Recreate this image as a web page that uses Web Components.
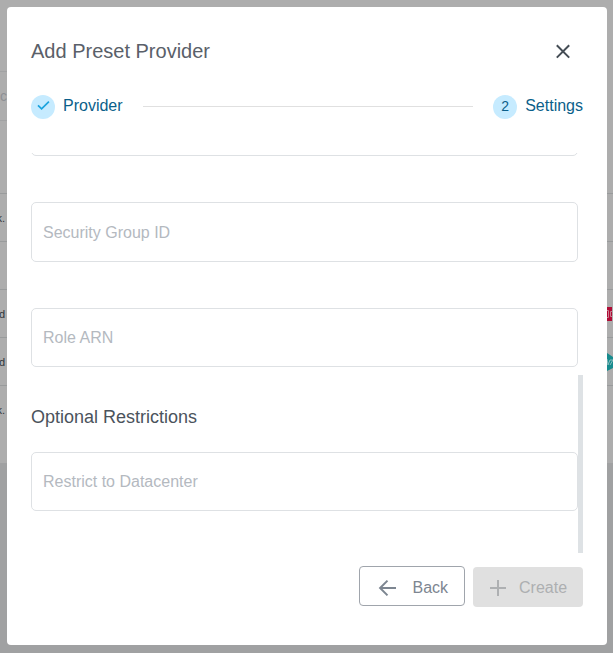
<!DOCTYPE html>
<html lang="en">
<head>
<meta charset="utf-8">
<title>Add Preset Provider</title>
<style>
html, body { margin: 0; height: 100%; overflow: hidden; }
body { font-family: "Liberation Sans", Arial, sans-serif; background: #a0a1a2; }
</style>
</head>
<body>
<preset-page></preset-page>
<script>
const define = (name, html) => customElements.define(name, class extends HTMLElement {
  connectedCallback() {
    if (this.shadowRoot) return;
    const template = document.createElement('template');
    template.innerHTML = html;
    this.attachShadow({ mode: 'open' }).append(template.content.cloneNode(true));
  }
});

define('table-row', `
<style>
:host { display: flex; box-sizing: border-box; height: 48px; border-bottom: 1px solid #999b9c; justify-content: space-between; align-items: center; font-size: 11px; color: #30353a; }
:host([last]) { border-bottom-color: transparent; }
.lead { display: flex; justify-content: flex-end; width: 5px; overflow: hidden; }
.logo { display: flex; width: 6px; height: 20px; align-items: center; overflow: hidden; }
</style>
<div class="lead"><slot></slot></div><div class="logo"><slot name="logo"></slot></div>`);

define('page-backdrop', `
<style>
:host { display: flex; flex-direction: column; box-sizing: border-box; height: 463px; background: #adadad; overflow: hidden; }
.search { box-sizing: border-box; margin-top: 71px; width: 300px; height: 50px; border: solid #a1a2a3; border-width: 1px 0; display: flex; align-items: center; }
.q { width: 7px; overflow: hidden; display: flex; justify-content: flex-end; font-size: 14px; color: #8d9094; }
.head { height: 72px; border-bottom: 1px solid #999b9c; }
svg { display: block; flex: none; }
</style>
<div class="search"><span class="q">c</span></div>
<div class="head"></div>
<table-row>k.</table-row>
<table-row></table-row>
<table-row>d<svg slot="logo" width="6" height="14" viewBox="0 0 6 14"><path fill="#b00b35" d="M0 0h5v14H0z"/><path fill="none" stroke="#c77f90" d="M0 3.5h1.5v7H0M5 4.5H3.5v5H5"/></svg></table-row>
<table-row>d<svg slot="logo" width="6" height="18" viewBox="0 0 6 18"><path fill="#178b8e" d="M0 0l6 4v11l-6 3z"/><path fill="none" stroke="#8cbcbd" d="M0 6l1 6 2-5h3M3 12l3-5"/></svg></table-row>
<table-row last>k.</table-row>`);

define('step-label', `
<style>
:host { display: flex; align-items: center; gap: 8px; height: 24px; font-size: 16px; color: #0b5f8a; }
.dot { width: 24px; height: 24px; border-radius: 50%; background: #c6ebff; display: flex; align-items: center; justify-content: center; font-size: 14px; }
.text { line-height: 18px; padding-bottom: 2px; }
::slotted(span) { padding-bottom: 2px; }
</style>
<span class="dot"><slot name="mark"></slot></span><span class="text"><slot></slot></span>`);

define('form-field', `
<style>
:host { display: flex; align-items: center; flex: none; box-sizing: border-box; width: 547px; height: 59px; padding: 0 11px; border: 1px solid #dee1e4; border-radius: 5px; font-size: 16px; color: #b4b9bf; }
:host([tall]) { height: 60px; padding-top: 1px; }
</style>
<slot></slot>`);

define('action-button', `
<style>
:host { display: flex; align-items: center; box-sizing: border-box; height: 40px; border-radius: 4px; font-size: 16px; }
:host([kind=back]) { width: 106px; border: 1px solid #a0a5ac; color: #7d8691; padding-left: 18px; gap: 14.5px; }
:host([kind=create]) { width: 110px; margin-top: 1px; background: #e0e0e0; color: #adafb1; padding-left: 16px; gap: 12px; }
.text { padding-top: 3px; }
:host([kind=create]) .text { padding-top: 2px; }
::slotted(svg) { display: block; flex: none; }
</style>
<slot name="icon"></slot><span class="text"><slot></slot></span>`);

define('scroll-pane', `
<style>
:host { display: flex; height: 400px; overflow: hidden; justify-content: space-between; }
.content { display: flex; flex-direction: column; justify-content: flex-end; height: 358px; }
.bar { width: 5px; height: 178px; align-self: flex-end; background: #dee2e5; }
</style>
<div class="content"><slot></slot></div><div class="bar"></div>`);

define('modal-dialog', `
<style>
:host { display: flex; flex-direction: column; box-sizing: border-box; width: 600px; height: 638px; padding: 32px 24px 0; border-radius: 4px; background: #fff; }
header { display: flex; align-items: center; justify-content: space-between; height: 24px; font-size: 20px; color: #5a6069; padding-right: 12px; }
.steps { display: flex; align-items: center; gap: 20px; height: 24px; margin: 32px 0 34px; }
.line { flex: 1; height: 1px; margin-bottom: 2px; background: #e0e0e0; }
footer { display: flex; gap: 8px; margin-top: 13px; justify-content: flex-end; }
h3 { margin: 40px 0 24px; font-size: 18px; font-weight: 400; line-height: 21px; color: #4b535c; }
form-field + form-field { margin-top: 46px; }
svg { display: block; }
</style>
<header><span>Add Preset Provider</span>
<svg width="16" height="16" viewBox="0 0 16 16" fill="none" stroke="#454d55" stroke-width="2"><path d="M1.8 2.2l12.4 12.4M14.2 2.2L1.8 14.6"/></svg></header>
<div class="steps">
<step-label>Provider<svg slot="mark" width="24" height="24" viewBox="0 0 24 24" fill="none" stroke="#1ba3de" stroke-width="1.7"><path d="M7 10.3l3.6 3.6 7.3-7.2"/></svg></step-label>
<div class="line"></div>
<step-label><span slot="mark">2</span>Settings</step-label>
</div>
<scroll-pane>
<form-field></form-field>
<form-field tall>Security Group ID</form-field>
<form-field>Role ARN</form-field>
<h3>Optional Restrictions</h3>
<form-field>Restrict to Datacenter</form-field>
</scroll-pane>
<footer>
<action-button kind="back"><svg slot="icon" width="20" height="22" viewBox="0 0 20 22" fill="none" stroke="#7d8691" stroke-width="2"><path d="M18 13H2.2M9.5 5.6L2.1 13l7.4 7.4"/></svg>Back</action-button>
<action-button kind="create"><svg slot="icon" width="18" height="18" viewBox="0 0 18 18" fill="none" stroke="#aeb0b2" stroke-width="2"><path d="M1 10h16M9 2v16"/></svg>Create</action-button>
</footer>`);

define('preset-page', `
<style>
:host { display: block; height: 653px; position: relative; }
modal-dialog { position: absolute; left: 7px; top: 7px; }
</style>
<page-backdrop></page-backdrop>
<modal-dialog></modal-dialog>`);
</script>
</body>
</html>
